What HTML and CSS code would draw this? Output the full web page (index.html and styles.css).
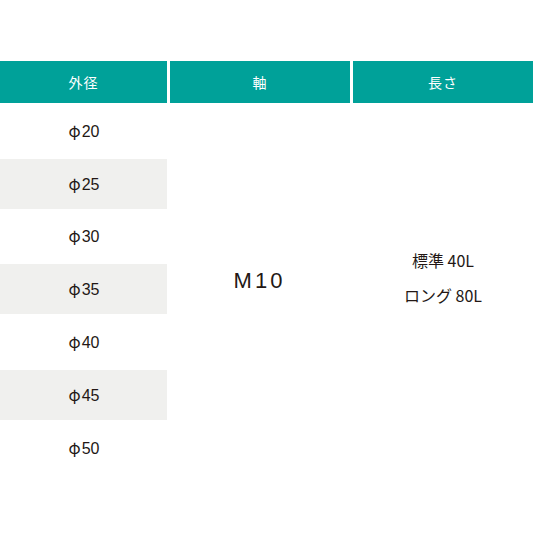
FILE: index.html
```html
<!DOCTYPE html>
<html lang="ja">
<head>
<meta charset="utf-8">
<link rel="stylesheet" href="styles.css">
</head>
<body>
<div class="spec">
  <div class="head">外径</div>
  <div class="head">軸</div>
  <div class="head">長さ</div>

  <div class="dia"><span class="val"><span class="phi">φ</span>20</span></div>
  <div class="shaft">M10</div>
  <div class="len"><span>標準 40L</span><span>ロング 80L</span></div>
  <div class="dia alt"><span class="val"><span class="phi">φ</span>25</span></div>
  <div class="dia"><span class="val"><span class="phi">φ</span>30</span></div>
  <div class="dia alt"><span class="val"><span class="phi">φ</span>35</span></div>
  <div class="dia"><span class="val"><span class="phi">φ</span>40</span></div>
  <div class="dia alt"><span class="val"><span class="phi">φ</span>45</span></div>
  <div class="dia"><span class="val"><span class="phi">φ</span>50</span></div>
</div>
</body>
</html>
```
FILE: styles.css
```css
html, body {
  margin: 0;
  padding: 0;
  background: #ffffff;
}
body {
  font-family: "Liberation Sans", "Noto Sans CJK JP", sans-serif;
  color: #231815;
}
.spec {
  display: grid;
  grid-template-columns: 167px 180px 180px;
  grid-template-rows: 42px repeat(7, 49.8px);
  column-gap: 3px;
  row-gap: 3px;
  padding-top: 61px;
  width: 533px;
}
.head {
  background: #00a199;
  color: #ffffff;
  font-family: "Noto Sans CJK JP", sans-serif;
  font-size: 14px;
  display: flex;
  align-items: center;
  justify-content: center;
  letter-spacing: 1px;
}
.dia {
  grid-column: 1;
  display: flex;
  align-items: center;
  justify-content: center;
  font-size: 16px;
  padding-left: 1px;
}
.val {
  line-height: 20px;
}
.phi {
  font-family: "Noto Sans CJK JP", sans-serif;
  margin-right: 1px;
}
.dia.alt {
  background: #f0f0ee;
}
.shaft {
  grid-column: 2;
  grid-row: 2 / 9;
  display: flex;
  align-items: center;
  justify-content: center;
  font-size: 22px;
  letter-spacing: 3px;
  padding-bottom: 16px;
  padding-right: 1px;
}
.len {
  grid-column: 3;
  grid-row: 2 / 9;
  display: flex;
  flex-direction: column;
  align-items: center;
  justify-content: center;
  gap: 13px;
  font-family: "Noto Sans CJK JP", sans-serif;
  font-size: 16px;
  padding-bottom: 24px;
}
.len span {
  line-height: 22px;
}
```
